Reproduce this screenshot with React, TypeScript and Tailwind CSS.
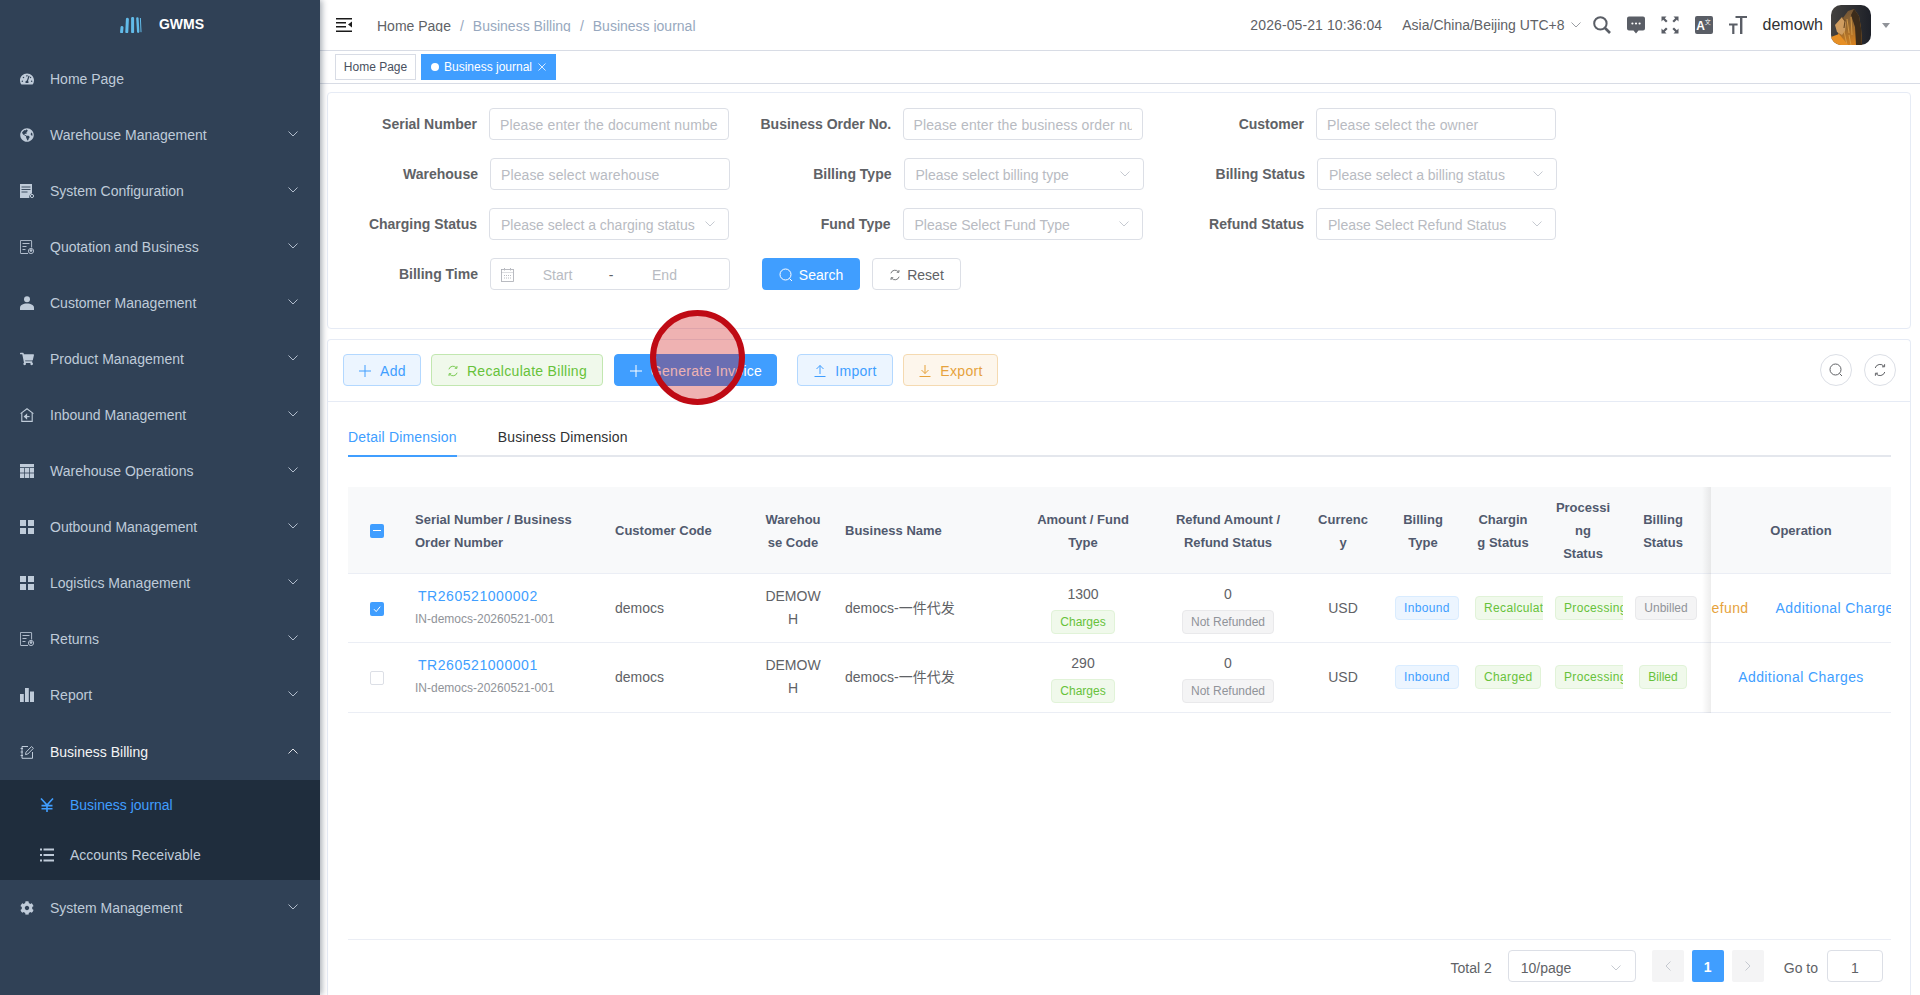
import React from 'react';
import { FaTachometerAlt, FaGlobeAmericas, FaShoppingCart, FaCog } from 'react-icons/fa';

const Chevron = ({ up = false, className = '' }: { up?: boolean; className?: string }) => (
  <svg viewBox="0 0 10 6" className={`w-[10px] h-[6px] ${className}`} fill="none" stroke="currentColor" strokeWidth="0.9">
    <polyline points={up ? '0.5,5.5 5,1 9.5,5.5' : '0.5,0.5 5,5 9.5,0.5'} />
  </svg>
);

const SquaresIcon = () => (
  <svg viewBox="0 0 14 14" className="w-[14px] h-[14px]" fill="currentColor">
    <rect x="0" y="0" width="6" height="6" />
    <rect x="8" y="0" width="6" height="6" />
    <rect x="0" y="8" width="6" height="6" />
    <rect x="8" y="8" width="6" height="6" />
  </svg>
);

const DocFilledIcon = () => (
  <svg viewBox="0 0 14 14" className="w-[14px] h-[14px]">
    <path d="M0 0h12v9.5a3.5 3.5 0 0 0-2.6 4.5H0z" fill="currentColor" />
    <path d="M1.5 3h9M1.5 5.5h9M1.5 8h6" stroke="#304156" strokeWidth="0.9" />
    <circle cx="12" cy="12" r="1.6" fill="none" stroke="currentColor" strokeWidth="1" />
  </svg>
);

const DocOutlineIcon = () => (
  <svg viewBox="0 0 14 14" className="w-[14px] h-[14px]" fill="none" stroke="currentColor" strokeWidth="0.9">
    <path d="M8 13.5H1a.6.6 0 0 1-.6-.6V1A.6.6 0 0 1 1 .4h10a.6.6 0 0 1 .6.6v6.5" />
    <path d="M2.5 3.5h7M2.5 6.5h4M2.5 9.5h3" />
    <circle cx="11" cy="11" r="2.6" />
    <circle cx="11" cy="10.5" r="0.9" fill="currentColor" />
  </svg>
);

const PersonIcon = () => (
  <svg viewBox="0 0 14 14" className="w-[14px] h-[14px]" fill="currentColor">
    <circle cx="7" cy="3.2" r="3" />
    <path d="M0 14v-2.2C0 9.4 3 7.6 7 7.6s7 1.8 7 4.2V14z" />
  </svg>
);

const HouseIcon = () => (
  <svg viewBox="0 0 14 14" className="w-[14px] h-[14px]" fill="none" stroke="currentColor" strokeWidth="1.1">
    <path d="M0.6 5.6 7 0.8l6.4 4.8" />
    <path d="M1.8 5v8.4h10.4V5" />
    <path d="M4.6 8.6h5" />
    <path d="M6.6 6.6 4.4 8.6l2.2 2z" fill="currentColor" />
  </svg>
);

const TableIcon = () => (
  <svg viewBox="0 0 14 14" className="w-[14px] h-[14px]" fill="currentColor">
    <rect x="0" y="0" width="14" height="3.2" />
    <rect x="0" y="4" width="4.2" height="4.6" />
    <rect x="4.9" y="4" width="4.2" height="4.6" />
    <rect x="9.8" y="4" width="4.2" height="4.6" />
    <rect x="0" y="9.4" width="4.2" height="4.6" />
    <rect x="4.9" y="9.4" width="4.2" height="4.6" />
    <rect x="9.8" y="9.4" width="4.2" height="4.6" />
  </svg>
);

const BarsIcon = () => (
  <svg viewBox="0 0 14 14" className="w-[14px] h-[14px]" fill="currentColor">
    <rect x="0" y="6" width="3.8" height="8" />
    <rect x="5" y="0" width="3.8" height="14" />
    <rect x="10" y="3.5" width="4" height="10.5" />
  </svg>
);

const EditIcon = () => (
  <svg viewBox="0 0 14 14" className="w-[14px] h-[14px]" fill="none" stroke="currentColor" strokeWidth="1">
    <path d="M8 1.5H2v11.8h10.5V7" />
    <path d="M0.6 3.5h2.4M0.6 7h2.4M0.6 10.5h2.4" />
    <path d="M5.5 9.6 6 7.2l5.6-5.7 1.8 1.8-5.6 5.7z" />
  </svg>
);

const ListIcon = () => (
  <svg viewBox="0 0 14 14" className="w-[14px] h-[14px]" fill="currentColor">
    <rect x="0" y="0.5" width="2" height="2" />
    <rect x="3.5" y="0.5" width="10.5" height="2" />
    <rect x="0" y="6" width="2" height="2" />
    <rect x="3.5" y="6" width="10.5" height="2" />
    <rect x="0" y="11.5" width="2" height="2" />
    <rect x="3.5" y="11.5" width="10.5" height="2" />
  </svg>
);

const YuanIcon = () => (
  <svg viewBox="0 0 14 14" className="w-[14px] h-[14px]" fill="none" stroke="currentColor" strokeWidth="1.6">
    <path d="M1 0.5 7 7l6-6.5M7 7v7M1.5 7.6h11M1.5 10.8h11" />
  </svg>
);

const SearchGlyph = ({ className = 'w-[14px] h-[14px]' }: { className?: string }) => (
  <svg viewBox="0 0 14 14" className={className} fill="none" stroke="currentColor" strokeWidth="1">
    <circle cx="6.5" cy="6.5" r="5.5" />
    <path d="M10.5 10.5 13 13" />
  </svg>
);

const RefreshGlyph = ({ className = 'w-[14px] h-[14px]' }: { className?: string }) => (
  <svg viewBox="0 0 14 14" className={className} fill="none" stroke="currentColor" strokeWidth="1">
    <path d="M2.2 5A5 5 0 0 1 11 3.4" />
    <path d="M11.8 9A5 5 0 0 1 3 10.6" />
    <path d="M11.6 1.2v2.6H9M2.4 12.8v-2.6H5" />
  </svg>
);

const PlusGlyph = () => (
  <svg viewBox="0 0 14 14" className="w-[14px] h-[14px]" fill="none" stroke="currentColor" strokeWidth="1">
    <path d="M7 1v12M1 7h12" />
  </svg>
);

const UploadGlyph = () => (
  <svg viewBox="0 0 14 14" className="w-[14px] h-[14px]" fill="none" stroke="currentColor" strokeWidth="1">
    <path d="M7 10V1.5M3.5 5 7 1.5 10.5 5M1.5 12.5h11" />
  </svg>
);

const DownloadGlyph = () => (
  <svg viewBox="0 0 14 14" className="w-[14px] h-[14px]" fill="none" stroke="currentColor" strokeWidth="1">
    <path d="M7 1v8.5M3.5 6 7 9.5 10.5 6M1.5 12.5h11" />
  </svg>
);

const Logo = () => (
  <svg viewBox="0 0 22 16" className="w-[22px] h-[16px]" fill="none" stroke="#62bbe9" strokeLinecap="round">
    <path d="M2 10.5 1.6 14.8" strokeWidth="3" />
    <path d="M7.4 2.2 6.8 14.8" strokeWidth="3" />
    <path d="M12.6 1.4 12.6 14.8" strokeWidth="3" />
    <path d="M17.4 1.4 18.2 14.8" strokeWidth="2.4" />
    <path d="M20.4 1.4 21 14.8" strokeWidth="1" />
  </svg>
);

const Avatar = () => (
  <svg viewBox="0 0 40 40" className="w-[40px] h-[40px] rounded-[10px] shrink-0">
    <defs>
      <linearGradient id="mane" x1="0.2" y1="0" x2="0.5" y2="1">
        <stop offset="0" stopColor="#6a5238" />
        <stop offset="0.5" stopColor="#98692f" />
        <stop offset="1" stopColor="#d4801f" />
      </linearGradient>
      <linearGradient id="back" x1="0" y1="0" x2="1" y2="0">
        <stop offset="0" stopColor="#44423f" />
        <stop offset="1" stopColor="#1d2028" />
      </linearGradient>
    </defs>
    <rect width="40" height="40" fill="url(#back)" />
    <path d="M7 40V24l2-7 8-11 6-2 5 7 2 12 1 17z" fill="url(#mane)" />
    <path d="M23 4l5 7 2 12 1 17h-6l-1-18-4-12z" fill="#3c2c1a" />
    <path d="M4 20l7-8 4 5-1 9-3 4-5-3z" fill="#cf9d60" />
    <path d="M11 12l3 4-1 7" fill="none" stroke="#6d4c26" strokeWidth="1.2" />
    <path d="M16 14l2 14M20 12l1 18M13 26l3 14M18 30l2 10" stroke="#dda34c" strokeWidth="0.8" fill="none" />
    <path d="M0 40v-8l8-3 9 11z" fill="#e68f25" />
  </svg>
);

const menus: { label: string; icon: React.ReactNode; arrow?: boolean }[] = [
  { label: 'Home Page', icon: <FaTachometerAlt size={14} /> },
  { label: 'Warehouse Management', icon: <FaGlobeAmericas size={14} />, arrow: true },
  { label: 'System Configuration', icon: <DocFilledIcon />, arrow: true },
  { label: 'Quotation and Business', icon: <DocOutlineIcon />, arrow: true },
  { label: 'Customer Management', icon: <PersonIcon />, arrow: true },
  { label: 'Product Management', icon: <FaShoppingCart size={14} />, arrow: true },
  { label: 'Inbound Management', icon: <HouseIcon />, arrow: true },
  { label: 'Warehouse Operations', icon: <TableIcon />, arrow: true },
  { label: 'Outbound Management', icon: <SquaresIcon />, arrow: true },
  { label: 'Logistics Management', icon: <SquaresIcon />, arrow: true },
  { label: 'Returns', icon: <DocOutlineIcon />, arrow: true },
  { label: 'Report', icon: <BarsIcon />, arrow: true },
];

const MenuRow = ({ label, icon, arrow, active }: { label: string; icon: React.ReactNode; arrow?: boolean; active?: boolean }) => (
  <div className={`h-[56px] flex items-center pl-[20px] pr-[22px] text-sm ${active ? 'text-[#f4f4f5] mt-px -mb-px' : 'text-[#bfcbd9]'}`}>
    <span className="w-[14px] flex justify-center text-[#bfcbd9] mr-[16px]">{icon}</span>
    <span className="flex-1">{label}</span>
    {arrow && <Chevron up={active} className="mb-[2px]" />}
  </div>
);

const Sidebar = () => (
  <aside className="relative z-20 w-[320px] shrink-0 bg-[#304156] shadow-[2px_0_6px_rgba(0,21,41,0.35)]">
    <div className="h-[51px] flex items-start justify-center pt-[17px] pl-[4px]">
      <Logo />
      <span className="ml-[17px] text-sm font-bold text-white leading-[14px]">GWMS</span>
    </div>
    {menus.map(m => (
      <MenuRow key={m.label} {...m} />
    ))}
    <MenuRow label="Business Billing" icon={<EditIcon />} arrow active />
    <div className="mt-px bg-[#1f2d3d] text-sm">
      <div className="h-[50px] flex items-center pl-[40px] text-[#409eff]">
        <span className="mr-[16px]">
          <YuanIcon />
        </span>
        Business journal
      </div>
      <div className="h-[50px] flex items-center pl-[40px] text-[#bfcbd9]">
        <span className="mr-[16px]">
          <ListIcon />
        </span>
        Accounts Receivable
      </div>
    </div>
    <MenuRow label="System Management" icon={<FaCog size={14} />} arrow />
  </aside>
);

const Header = () => (
  <header className="h-[51px] shrink-0 flex items-center border-b border-[#d8dce5] bg-white pl-[16px] pr-[30px]">
    <svg viewBox="0 0 16 14" className="w-[16px] h-[14px] text-[#1a1a1a]" fill="currentColor">
      <rect x="0" y="0" width="16" height="1.5" />
      <rect x="0" y="4" width="10" height="1.5" />
      <rect x="0" y="8" width="10" height="1.5" />
      <rect x="0" y="12.5" width="16" height="1.5" />
      <path d="M16 3.6v6L12 6.6z" />
    </svg>
    <div className="ml-[25px] h-[13px] leading-[14px] text-sm overflow-hidden flex">
      <span className="text-[#606266]">Home Page</span>
      <span className="text-[#97a8be] mx-[9px]">/</span>
      <span className="text-[#97a8be]">Business Billing</span>
      <span className="text-[#97a8be] mx-[9px]">/</span>
      <span className="text-[#97a8be]">Business journal</span>
    </div>
    <div className="ml-auto flex items-center">
      <span className="text-sm text-[#606266] tracking-[0.1px]">2026-05-21 10:36:04</span>
      <span className="ml-[20px] text-sm text-[#606266]">Asia/China/Beijing UTC+8</span>
      <Chevron className="ml-[6px] text-[#909399]" />
      <svg viewBox="0 0 18 18" className="ml-[12px] w-[18px] h-[18px] text-[#5a5e66]" fill="none" stroke="currentColor">
        <circle cx="7.4" cy="7.4" r="6.2" strokeWidth="2" />
        <path d="M12 12l5 5" strokeWidth="2.6" />
      </svg>
      <svg viewBox="0 0 18 18" className="ml-[16px] w-[18px] h-[18px] text-[#5a5e66]" fill="currentColor">
        <path d="M2 0.5h14a2 2 0 0 1 2 2v10a2 2 0 0 1-2 2h-4.5L9 17.5 6.5 14.5H2a2 2 0 0 1-2-2v-10a2 2 0 0 1 2-2z" />
        <circle cx="5.4" cy="7.5" r="1.1" fill="#fff" />
        <circle cx="9" cy="7.5" r="1.1" fill="#fff" />
        <circle cx="12.6" cy="7.5" r="1.1" fill="#fff" />
      </svg>
      <svg viewBox="0 0 18 18" className="ml-[16px] w-[18px] h-[18px] text-[#5a5e66]" fill="currentColor">
        <path d="M0.5 0.5h5L3.8 2.2 6.6 5 5 6.6 2.2 3.8 0.5 5.5z" />
        <path d="M17.5 0.5v5l-1.7-1.7L13 6.6 11.4 5l2.8-2.8-1.7-1.7z" />
        <path d="M0.5 17.5v-5l1.7 1.7L5 11.4 6.6 13l-2.8 2.8 1.7 1.7z" />
        <path d="M17.5 17.5h-5l1.7-1.7L11.4 13l1.6-1.6 2.8 2.8 1.7-1.7z" />
      </svg>
      <div className="ml-[16px] w-[18px] h-[18px] rounded-[2px] bg-[#5a5e66] flex items-start justify-center text-white overflow-hidden">
        <span className="text-[12px] leading-[20px] font-bold">A</span>
        <span className="text-[6px] leading-[10px] mt-[1px]">文</span>
      </div>
      <svg viewBox="0 0 18 18" className="ml-[16px] w-[18px] h-[18px] text-[#5a5e66]" fill="currentColor">
        <path d="M6.5 0h11.5v2h-4.6v16h-2.4V2H6.5z" />
        <path d="M0 7.6h8.6v1.8H5.4V18H3.2V9.4H0z" />
      </svg>
      <span className="ml-[16px] text-base text-[#303133]">demowh</span>
      <span className="ml-[8px]">
        <Avatar />
      </span>
      <span className="ml-[11px] w-0 h-0 border-x-[4px] border-x-transparent border-t-[5px] border-t-[#909399]" />
    </div>
  </header>
);

const TagsBar = () => (
  <div className="h-[33px] shrink-0 flex items-center gap-[5px] pl-[15px] pb-[1px] border-b border-[#d8dce5] bg-white text-xs">
    <span className="w-[81px] h-[26px] flex items-center justify-center border border-[#d8dce5] text-[#495060]">Home Page</span>
    <span className="w-[135px] h-[26px] flex items-center justify-center bg-[#409eff] text-white">
      <span className="w-[8px] h-[8px] rounded-full bg-white mr-[5px]" />
      Business journal
      <svg viewBox="0 0 8 8" className="ml-[6px] w-[8px] h-[8px] mt-[1px]" fill="none" stroke="currentColor" strokeWidth="0.8">
        <path d="M0.5 0.5l7 7M7.5 0.5l-7 7" />
      </svg>
    </span>
  </div>
);

const Field = ({ label, placeholder, select }: { label: string; placeholder: string; select?: boolean }) => (
  <div className="flex items-center w-[382px]">
    <label className="w-[130px] mr-[12px] text-right text-sm font-bold text-[#606266] whitespace-nowrap">{label}</label>
    <div className="relative w-[240px] h-[32px] rounded border border-[#dcdfe6] bg-white flex items-center">
      <input
        readOnly
        placeholder={placeholder}
        className={`w-full h-full pt-[2px] bg-transparent outline-none text-sm placeholder:text-[#b8bbc2] ${
          select ? 'pl-[11px] pr-[28px]' : 'px-[10px] tracking-[0.12px]'
        }`}
      />
      {select && <Chevron className="absolute right-[13px] text-[#c0c4cc]" />}
    </div>
  </div>
);

const SearchCard = () => (
  <section className="h-[237px] shrink-0 mt-[8px] rounded border border-[#e6ebf5] bg-white pt-[15px] pl-[19px]">
    <div className="flex items-start gap-[31.5px] h-[50px]">
      <Field label="Serial Number" placeholder="Please enter the document number" />
      <Field label="Business Order No." placeholder="Please enter the business order number" />
      <Field label="Customer" placeholder="Please select the owner" />
    </div>
    <div className="flex items-start gap-[31.5px] h-[50px] ml-px">
      <Field label="Warehouse" placeholder="Please select warehouse" />
      <Field label="Billing Type" placeholder="Please select billing type" select />
      <Field label="Billing Status" placeholder="Please select a billing status" select />
    </div>
    <div className="flex items-start gap-[31.5px] h-[50px]">
      <Field label="Charging Status" placeholder="Please select a charging status" select />
      <Field label="Fund Type" placeholder="Please Select Fund Type" select />
      <Field label="Refund Status" placeholder="Please Select Refund Status" select />
    </div>
    <div className="flex h-[32px] ml-px">
      <label className="w-[130px] mr-[12px] text-right text-sm font-bold text-[#606266] leading-[32px]">Billing Time</label>
      <div className="w-[240px] h-[32px] rounded border border-[#dcdfe6] flex items-center pl-[10px] pt-[2px] text-sm text-[#b8bbc2]">
        <svg viewBox="0 0 13 14" className="w-[13px] h-[14px] mr-px" fill="none" stroke="#a8abb2" strokeWidth="0.8">
          <rect x="0.5" y="1.5" width="12" height="12" />
          <path d="M0.5 4.5h12M3.5 0v2.5M9.5 0v2.5M3 7.5h7M3 10h7" strokeDasharray="1 1" />
        </svg>
        <span className="w-[85px] text-center">Start</span>
        <span className="w-[22px] text-center text-[#606266]">-</span>
        <span className="w-[85px] text-center">End</span>
      </div>
      <button className="ml-[32px] w-[98px] h-[32px] pt-[2px] rounded bg-[#409eff] text-white text-sm flex items-center justify-center gap-[6px]">
        <SearchGlyph />
        Search
      </button>
      <button className="ml-[12px] w-[89px] h-[32px] pt-[2px] rounded border border-[#dcdfe6] text-[#606266] text-sm flex items-center justify-center gap-[6px]">
        <RefreshGlyph className="w-[12px] h-[12px]" />
        Reset
      </button>
    </div>
  </section>
);

const toolBtn = 'h-[32px] pt-[2px] rounded border flex items-center justify-center gap-[8px]';

const Toolbar = () => (
  <div className="h-[62px] shrink-0 flex items-start pt-[14px] pl-[15px] pr-[14px] border-b border-[#e6ebf5] text-sm tracking-[0.3px]">
    <button className={`${toolBtn} w-[78px] border-[#b3d8ff] bg-[#ecf5ff] text-[#409eff]`}>
      <PlusGlyph />
      Add
    </button>
    <button className={`${toolBtn} ml-[10px] w-[172px] border-[#c2e7b0] bg-[#f0f9eb] text-[#67c23a]`}>
      <RefreshGlyph className="w-[12px] h-[12px]" />
      Recalculate Billing
    </button>
    <button className={`${toolBtn} ml-[11px] w-[163px] border-[#409eff] bg-[#409eff] text-white`}>
      <PlusGlyph />
      Generate Invoice
    </button>
    <button className={`${toolBtn} ml-[20px] w-[96px] border-[#b3d8ff] bg-[#ecf5ff] text-[#409eff]`}>
      <UploadGlyph />
      Import
    </button>
    <button className={`${toolBtn} ml-[10px] w-[95px] border-[#f5dab1] bg-[#fdf6ec] text-[#e6a23c]`}>
      <DownloadGlyph />
      Export
    </button>
    <button className="ml-auto w-[32px] h-[32px] rounded-full border border-[#dcdfe6] text-[#606266] flex items-center justify-center">
      <SearchGlyph />
    </button>
    <button className="ml-[12px] w-[32px] h-[32px] rounded-full border border-[#dcdfe6] text-[#606266] flex items-center justify-center">
      <RefreshGlyph />
    </button>
  </div>
);

type TagColor = 'blue' | 'green' | 'gray';
const tagStyles: Record<TagColor, string> = {
  blue: 'bg-[#ecf5ff] border-[#d9ecff] text-[#409eff]',
  green: 'bg-[#f0f9eb] border-[#e1f3d8] text-[#67c23a]',
  gray: 'bg-[#f4f4f5] border-[#e9e9eb] text-[#909399]',
};

const Tag = ({ color, children, className = '' }: { color: TagColor; children: React.ReactNode; className?: string }) => (
  <span className={`inline-block h-[24px] leading-[22px] px-[8px] text-xs rounded border whitespace-nowrap ${tagStyles[color]} ${className}`}>
    {children}
  </span>
);

const Checkbox = ({ state }: { state: 'on' | 'off' | 'mixed' }) => (
  <span
    className={`w-[14px] h-[14px] rounded-[2px] inline-flex items-center justify-center align-middle ${
      state === 'off' ? 'border border-[#dcdfe6] bg-white' : 'bg-[#409eff]'
    }`}
  >
    {state === 'mixed' && <span className="w-[8px] h-[1.5px] bg-white" />}
    {state === 'on' && (
      <svg viewBox="0 0 10 10" className="w-[10px] h-[10px]" fill="none" stroke="#fff" strokeWidth="1">
        <path d="M2 5.2 4.2 7.6 8.2 2.6" />
      </svg>
    )}
  </span>
);

const JournalRow = ({
  checked,
  serial,
  amount,
  height,
  charging,
  billing,
  refundAction,
}: {
  checked: boolean;
  serial: string;
  amount: string;
  height: string;
  charging: string;
  billing: React.ReactNode;
  refundAction?: boolean;
}) => (
  <tr className={`${height} border-b border-[#ebeef5] text-sm text-[#606266]`}>
    <td className="text-center pl-[1px]">
      <Checkbox state={checked ? 'on' : 'off'} />
    </td>
    <td className="px-[10px]">
      <div className="pl-[3px] leading-[23px] text-[#409eff] tracking-[0.55px]">{serial}</div>
      <div className="text-xs leading-[23px] text-[#909399]">IN-democs-20260521-001</div>
    </td>
    <td className="px-[10px]">democs</td>
    <td className="px-[10px] text-center break-words leading-[23px]">DEMOWH</td>
    <td className="px-[10px]">democs-一件代发</td>
    <td className="px-[10px] text-center">
      <div className="leading-[24px] mb-[4px]">{amount}</div>
      <div className="flex justify-center">
        <Tag color="green">Charges</Tag>
      </div>
    </td>
    <td className="px-[10px] text-center">
      <div className="leading-[24px] mb-[4px]">0</div>
      <div className="flex justify-center">
        <Tag color="gray">Not Refunded</Tag>
      </div>
    </td>
    <td className="px-[10px] text-center">USD</td>
    <td className="pl-[12px] overflow-hidden whitespace-nowrap tracking-[0.35px]">
      <Tag color="blue">Inbound</Tag>
    </td>
    <td className="pl-[12px] overflow-hidden whitespace-nowrap tracking-[0.35px]">
      <Tag color="green">{charging}</Tag>
    </td>
    <td className="pl-[12px] overflow-hidden whitespace-nowrap tracking-[0.35px]">
      <Tag color="green">Processing</Tag>
    </td>
    <td className="pr-[8px] overflow-hidden whitespace-nowrap text-center">{billing}</td>
    <td className="relative z-10 bg-white overflow-hidden p-0">
      <div className="flex justify-center gap-[27px] whitespace-nowrap tracking-[0.4px]">
        {refundAction && <span className="shrink-0 text-[#e6a23c]">Refund</span>}
        <span className="shrink-0 text-[#409eff]">Additional Charges</span>
      </div>
    </td>
  </tr>
);

const headCell = 'px-[10px] pt-[2px] text-[13px] font-bold leading-[23px] text-[#515a6e] break-words';
const headNarrow = 'px-[12px] pt-[2px] text-[13px] font-bold leading-[23px] text-[#515a6e] break-words text-center';

const JournalTable = () => (
  <div className="relative">
    <table className="table-fixed w-[1543px] border-collapse">
      <colgroup>
        <col className="w-[57px]" />
        <col className="w-[200px]" />
        <col className="w-[146px]" />
        <col className="w-[84px]" />
        <col className="w-[178px]" />
        <col className="w-[140px]" />
        <col className="w-[150px]" />
        <col className="w-[80px]" />
        <col className="w-[80px]" />
        <col className="w-[80px]" />
        <col className="w-[80px]" />
        <col className="w-[88px]" />
        <col className="w-[180px]" />
      </colgroup>
      <thead>
        <tr className="h-[86px] bg-[#f8f9fa] border-b border-[#ebeef5]">
          <th className="text-center pl-[1px] font-normal">
            <Checkbox state="mixed" />
          </th>
          <th className={`${headCell} text-left`}>Serial Number / Business Order Number</th>
          <th className={`${headCell} text-left`}>Customer Code</th>
          <th className="px-[14px] pt-[2px] text-[13px] font-bold leading-[23px] text-[#515a6e] break-words text-center">Warehouse Code</th>
          <th className={`${headCell} text-left`}>Business Name</th>
          <th className={`${headCell} text-center`}>Amount / Fund Type</th>
          <th className={`${headCell} text-center`}>Refund Amount / Refund Status</th>
          <th className={headNarrow}>Currency</th>
          <th className={headNarrow}>Billing Type</th>
          <th className={headNarrow}>Charging Status</th>
          <th className={headNarrow}>Processing Status</th>
          <th className="pl-[12px] pr-[20px] pt-[2px] text-[13px] font-bold leading-[23px] text-[#515a6e] break-words text-center">Billing Status</th>
          <th className={`${headCell} text-center`}>Operation</th>
        </tr>
      </thead>
      <tbody>
        <JournalRow
          checked
          serial="TR260521000002"
          amount="1300"
          height="h-[69px]"
          charging="Recalculate"
          billing={<Tag color="gray" className="ml-[6px]">Unbilled</Tag>}
          refundAction
        />
        <JournalRow
          checked={false}
          serial="TR260521000001"
          amount="290"
          height="h-[70px]"
          charging="Charged"
          billing={<Tag color="green">Billed</Tag>}
        />
      </tbody>
    </table>
    {/* shadow of the fixed operation column */}
    <div className="absolute top-0 bottom-0 left-[1354px] w-[9px] z-10 bg-gradient-to-l from-black/[0.07] to-transparent" />
  </div>
);

const Pagination = () => (
  <div className="shrink-0 h-[56px] mt-auto border-t border-[#ebeef5] pt-[10px] pr-[8px] flex items-start justify-end text-sm text-[#606266]">
    <span className="leading-[36px]">Total 2</span>
    <div className="ml-[16px] w-[128px] h-[32px] pt-[3px] rounded border border-[#dcdfe6] flex items-center justify-between pl-[12px] pr-[14px]">
      10/page
      <Chevron className="text-[#c0c4cc]" />
    </div>
    <span className="ml-[16px] w-[32px] h-[32px] rounded-[2px] bg-[#f4f4f5] flex items-center justify-center text-[#c0c4cc]">
      <svg viewBox="0 0 6 10" className="w-[6px] h-[10px]" fill="none" stroke="currentColor" strokeWidth="0.9">
        <path d="M5.5 0.5 1 5l4.5 4.5" />
      </svg>
    </span>
    <span className="ml-[8px] w-[32px] h-[32px] pt-[1px] rounded-[2px] bg-[#409eff] text-white font-bold flex items-center justify-center">1</span>
    <span className="ml-[8px] w-[32px] h-[32px] rounded-[2px] bg-[#f4f4f5] flex items-center justify-center text-[#c0c4cc]">
      <svg viewBox="0 0 6 10" className="w-[6px] h-[10px]" fill="none" stroke="currentColor" strokeWidth="0.9">
        <path d="M0.5 0.5 5 5 0.5 9.5" />
      </svg>
    </span>
    <span className="ml-[20px] leading-[36px]">Go to</span>
    <span className="ml-[9px] w-[56px] h-[32px] pt-[3px] rounded border border-[#dcdfe6] flex items-center justify-center">1</span>
  </div>
);

export default function App() {
  return (
    <div className="relative w-[1920px] h-[995px] overflow-hidden flex bg-white font-['Liberation_Sans','Noto_Sans_CJK_SC',sans-serif]">
      <Sidebar />
      <main className="flex-1 min-w-0 flex flex-col">
        <Header />
        <TagsBar />
        <div className="flex-1 min-h-0 flex flex-col pl-[7px] pr-[9px]">
          <SearchCard />
          <section className="flex-1 min-h-0 mt-[10px] rounded-t border border-b-0 border-[#e6ebf5] flex flex-col">
            <Toolbar />
            <div className="flex-1 min-h-0 flex flex-col pl-[20px] pr-[19px]">
              <div className="h-[55px] shrink-0 border-b-2 border-[#e4e7ed] flex items-end text-sm tracking-[0.18px]">
                <span className="h-[38px] -mb-[2px] leading-[36px] border-b-2 border-[#409eff] text-[#409eff]">Detail Dimension</span>
                <span className="h-[38px] -mb-[2px] leading-[36px] ml-[41px] text-[#303133]">Business Dimension</span>
              </div>
              <div className="mt-[30px]">
                <JournalTable />
              </div>
              <Pagination />
            </div>
          </section>
        </div>
      </main>
      {/* red click marker over the Generate Invoice button */}
      <div className="absolute left-[650px] top-[310px] z-30 w-[95px] h-[95px] rounded-full border-[6px] border-[#bf0a14] bg-[#cc0000]/30" />
    </div>
  );
}
